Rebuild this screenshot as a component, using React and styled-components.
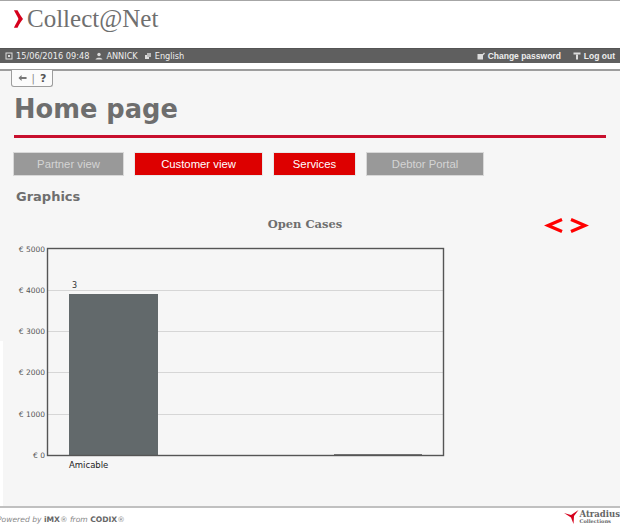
import React from "react";
import styled, { createGlobalStyle } from "styled-components";

const GlobalStyle = createGlobalStyle`
  html, body { margin: 0; padding: 0; background: #fff; }
  body { font-family: "Liberation Sans", Arial, sans-serif; }
`;

const Page = styled.div`
  width: 620px;
  height: 531px;
  display: flex;
  flex-direction: column;
  overflow: hidden;
  background: #fff;
`;

const Header = styled.header`
  height: 48px;
  box-sizing: border-box;
  border-top: 1px solid #a6a6a6;
  padding: 0 0 0 13px;
  display: flex;
  align-items: center;
  gap: 4px;
`;

const LogoText = styled.div`
  font-family: "Liberation Serif", serif;
  font-size: 25px;
  color: #6f6f6f;
  line-height: 34px;
  margin-top: -12px;
`;

const LogoMark = styled.svg`
  width: 10px;
  height: 18px;
  margin-top: -12px;
  flex: none;
`;

const StatusBar = styled.div`
  height: 15px;
  background: #5f5f5f;
  border-top: 1px solid #555;
  box-sizing: border-box;
  display: flex;
  align-items: center;
  justify-content: space-between;
  padding: 0 5px 0 5px;
  color: #eee;
  font-size: 9px;
`;

const StatusGroup = styled.div`
  display: flex;
  align-items: center;
  gap: ${(p) => p.$gap || 6}px;
  font-family: ${(p) => (p.$bold ? '"Liberation Sans", sans-serif' : '"DejaVu Sans", sans-serif')};
  font-weight: ${(p) => (p.$bold ? 700 : 400)};
  font-size: ${(p) => (p.$bold ? 8.5 : 8.2)}px;
  white-space: nowrap;
`;

const StatusItem = styled.span`
  display: flex;
  align-items: center;
  gap: 3px;
`;

const Gap = styled.div`
  height: 6px;
  background: #fff;
`;

const Main = styled.main`
  position: relative;
  height: 439px;
  flex: none;
  box-sizing: border-box;
  background: #f6f6f6;
  border-top: 2px solid #9d9d9d;
  border-bottom: 2px solid #c0c0c0;
  display: flex;
  flex-direction: column;
  &::after {
    content: "";
    position: absolute;
    left: 0;
    top: 270px;
    bottom: 0;
    width: 3px;
    background: #fff;
  }
`;

const Tab = styled.div`
  width: 42px;
  height: 17px;
  margin-left: 11px;
  margin-top: -1px;
  box-sizing: border-box;
  background: #fbfbfb;
  border: 1px solid #9d9d9d;
  border-top: none;
  border-radius: 0 0 3px 3px;
  display: flex;
  align-items: center;
  justify-content: center;
  gap: 5px;
  color: #555;
  font-family: "DejaVu Sans", sans-serif;
  font-size: 11px;
  font-weight: 700;
`;

const TabDivider = styled.span`
  font-size: 10px;
  font-weight: 400;
  color: #888;
`;

const Title = styled.h1`
  margin: 5px 0 0 14px;
  font-family: "DejaVu Sans", sans-serif;
  font-size: 25.7px;
  line-height: 35px;
  font-weight: 700;
  color: #6e6e6e;
`;

const Rule = styled.div`
  height: 3px;
  margin: 8px 14px 0 14px;
  background: #c8102e;
`;

const Tabs = styled.nav`
  display: flex;
  gap: 10px;
  margin: 14px 0 0 13px;
`;

const ViewButton = styled.div`
  width: ${(p) => p.$w}px;
  height: 24px;
  box-sizing: border-box;
  border: 1px solid ${(p) => (p.$active ? "#e8e8e8" : "#d8d8d8")};
  background: ${(p) => (p.$active ? "#dd0000" : "#999999")};
  color: ${(p) => (p.$active ? "#fff" : "#d4d4d4")};
  font-size: 11.3px;
  display: flex;
  align-items: center;
  justify-content: center;
`;

const Section = styled.h2`
  margin: 12px 0 0 16px;
  font-family: "DejaVu Sans", sans-serif;
  font-size: 13px;
  line-height: 17px;
  font-weight: 700;
  color: #6e6e6e;
`;

const ChartHead = styled.div`
  position: relative;
  height: 22px;
  margin-top: 11px;
`;

const ChartTitle = styled.div`
  width: 610px;
  text-align: center;
  font-family: "DejaVu Serif", serif;
  font-size: 11.5px;
  line-height: 16px;
  font-weight: 700;
  color: #6e6e6e;
`;

const Pager = styled.div`
  position: absolute;
  left: 544px;
  top: 0;
  display: flex;
  gap: 7px;
`;

const ChartSvg = styled.svg`
  display: block;
  width: 460px;
  height: 240px;
  margin-top: 6px;
  flex: none;
`;

const Footer = styled.footer`
  flex: 1;
  display: flex;
  justify-content: space-between;
  align-items: flex-start;
  padding: 2px 0 0 0;
`;

const Powered = styled.div`
  font-family: "DejaVu Sans", sans-serif;
  font-size: 7.6px;
  line-height: 9px;
  color: #888;
  font-style: italic;
  margin-left: -3px;
  margin-top: 5px;
  b { font-style: normal; color: #666; }
`;

const Brand = styled.div`
  display: flex;
  align-items: flex-start;
  gap: 1px;
`;

const BrandText = styled.div`
  font-family: "DejaVu Serif", serif;
  color: #666;
  font-weight: 700;
  font-size: 8.5px;
  line-height: 9px;
  small { display: block; font-size: 5px; line-height: 5px; }
`;

const Icon = ({ children }) => (
  <svg width="8" height="8" viewBox="0 0 8 8" fill="#ddd">{children}</svg>
);

const Arrow = ({ flip }) => (
  <svg width="19" height="19" viewBox="0 0 19 19" style={flip ? { transform: "scaleX(-1)" } : undefined}>
    <path d="M18 3.5 L4 9.5 L18 15.5" fill="none" stroke="#f00" strokeWidth="3.2" />
  </svg>
);

const ticks = [
  { y: 5, label: "€ 5000" },
  { y: 46, label: "€ 4000" },
  { y: 87, label: "€ 3000" },
  { y: 128, label: "€ 2000" },
  { y: 170, label: "€ 1000" },
  { y: 211, label: "€ 0" },
];

const Chart = () => (
  <ChartSvg viewBox="0 0 460 240">
    {ticks.slice(1, 5).map((t) => (
      <line key={t.y} x1="48" x2="443" y1={t.y + 0.5} y2={t.y + 0.5} stroke="#d6d6d6" />
    ))}
    <rect x="69" y="50" width="89" height="161" fill="#62696b" />
    <line x1="334" x2="422" y1="210.5" y2="210.5" stroke="#777" />
    <rect x="47.5" y="4.5" width="396" height="207" fill="none" stroke="#555" strokeWidth="1.4" />
    {ticks.map((t) => (
      <text key={t.label} x="45" y={t.y + 3} textAnchor="end" fontFamily="DejaVu Sans, sans-serif" fontSize="7.5" fill="#555">
        {t.label}
      </text>
    ))}
    <text x="72" y="44" fontFamily="DejaVu Sans, sans-serif" fontSize="8" fill="#333">3</text>
    <text x="69" y="224" fontFamily="DejaVu Sans, sans-serif" fontSize="8.5" fill="#222">Amicable</text>
  </ChartSvg>
);

export default function App() {
  return (
    <Page>
      <GlobalStyle />
      <Header>
        <LogoMark viewBox="0 0 11 19">
          <path d="M1 0 L5 0 C7 4 9 7 11 9.5 C9 12 7 15 5 19 L1 19 C3 15 5 12 6 9.5 C5 7 3 4 1 0 Z" fill="#d6001c" />
        </LogoMark>
        <LogoText>Collect@Net</LogoText>
      </Header>
      <StatusBar>
        <StatusGroup>
          <StatusItem>
            <Icon><rect x="1" y="1" width="6" height="6" fill="none" stroke="#ddd" /><rect x="3" y="3" width="2" height="2" /></Icon>
            15/06/2016 09:48
          </StatusItem>
          <StatusItem>
            <Icon><circle cx="4" cy="2.5" r="1.7" /><path d="M0.5 7.5 C1 5 7 5 7.5 7.5 Z" /></Icon>
            ANNICK
          </StatusItem>
          <StatusItem>
            <Icon><rect x="1" y="3" width="4" height="4" /><rect x="3" y="1" width="4" height="4" fill="#bbb" /></Icon>
            English
          </StatusItem>
        </StatusGroup>
        <StatusGroup $bold $gap={12}>
          <StatusItem>
            <Icon><rect x="0.5" y="2" width="5.5" height="5.5" /><path d="M3 5 L7 0.5 L8 1.5 L4 5.5 Z" /></Icon>
            Change password
          </StatusItem>
          <StatusItem>
            <Icon><rect x="0.5" y="0.5" width="7" height="2" /><rect x="3" y="2.5" width="2" height="5" /></Icon>
            Log out
          </StatusItem>
        </StatusGroup>
      </StatusBar>
      <Gap />
      <Main>
        <Tab>
          <svg width="9" height="8" viewBox="0 0 10 8">
            <path d="M0.5 4 L4 0.8 V2.8 H9.5 V5.2 H4 V7.2 Z" fill="#777" />
          </svg>
          <TabDivider>|</TabDivider>
          <span>?</span>
        </Tab>
        <Title>Home page</Title>
        <Rule />
        <Tabs>
          <ViewButton $w={111}>Partner view</ViewButton>
          <ViewButton $w={129} $active>Customer view</ViewButton>
          <ViewButton $w={83} $active>Services</ViewButton>
          <ViewButton $w={118}>Debtor Portal</ViewButton>
        </Tabs>
        <Section>Graphics</Section>
        <ChartHead>
          <ChartTitle>Open Cases</ChartTitle>
          <Pager>
            <Arrow />
            <Arrow flip />
          </Pager>
        </ChartHead>
        <Chart />
      </Main>
      <Footer>
        <Powered>Powered by <b>iMX</b>® from <b>CODIX</b>®</Powered>
        <Brand>
          <svg width="15" height="14" viewBox="0 0 15 14">
            <path d="M0 3 L7 5 L14.5 0 L10 6 L9.5 14 L7 7.5 Z" fill="#d6001c" />
          </svg>
          <BrandText>Atradius<small>Collections</small></BrandText>
        </Brand>
      </Footer>
    </Page>
  );
}
